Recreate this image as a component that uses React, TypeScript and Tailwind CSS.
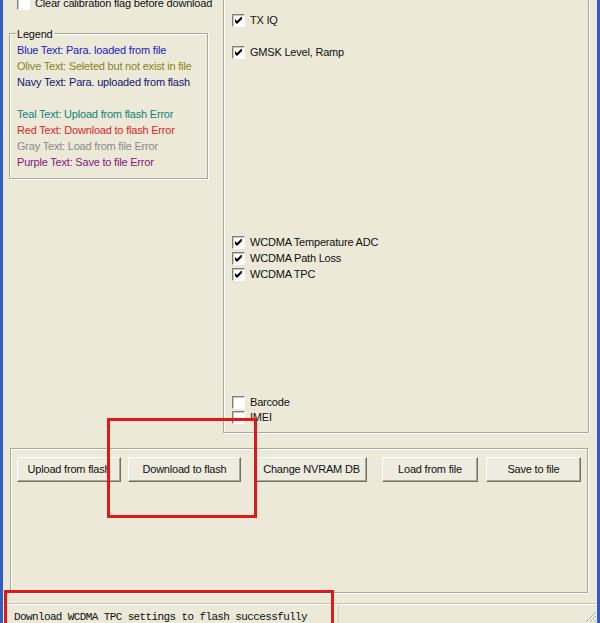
import React from 'react';

function CheckBox({ checked }: { checked?: boolean }) {
  return (
    <span className="flex w-[13px] h-[13px] shrink-0 items-center justify-center border border-t-[#808080] border-l-[#808080] border-r-white border-b-white bg-white shadow-[inset_1px_1px_0_#c9c6b8]">
      {checked && (
        <svg width="7" height="7" viewBox="0 0 7 7" className="block">
          <path d="M0 2 L2 4 L7 -1 L7 2 L2 7 L0 5 Z" fill="#000" />
        </svg>
      )}
    </span>
  );
}

function Row({ label, checked, h }: { label: string; checked?: boolean; h: string }) {
  return (
    <div className={`flex items-center gap-[5px] ${h}`}>
      <CheckBox checked={checked} />
      <span className="leading-[13px]">{label}</span>
    </div>
  );
}

function Btn({ label, w }: { label: string; w: string }) {
  return (
    <div className={`flex h-[25px] ${w} shrink-0 items-center justify-center border border-t-white border-l-white border-r-[#716f64] border-b-[#716f64] bg-[#eeebdf] shadow-[inset_-1px_-1px_0_#aca899]`}>
      {label}
    </div>
  );
}

const legend = [
  { text: 'Blue Text: Para. loaded from file', color: 'text-[#1c1cc4]' },
  { text: 'Olive Text: Seleted but not exist in file', color: 'text-[#86861c]' },
  { text: 'Navy Text: Para. uploaded from flash', color: 'text-[#141470]' },
  { text: '', color: '' },
  { text: 'Teal Text: Upload from flash Error', color: 'text-[#128478]' },
  { text: 'Red Text: Download to flash Error', color: 'text-[#e22626]' },
  { text: 'Gray Text: Load from file Error', color: 'text-[#8a8a8a]' },
  { text: 'Purple Text: Save to file Error', color: 'text-[#84167e]' },
];

export default function App() {
  return (
    <div className="relative flex w-[600px] h-[623px] overflow-hidden bg-[#ECE9D8] font-['Liberation_Sans',Arial,sans-serif] text-[11px] tracking-[-0.2px] text-[#111]">
      <div className="w-[3px] shrink-0 bg-[#2f5cc6]" />

      <div className="flex flex-1 flex-col">
        {/* upper area */}
        <div className="flex h-[434px]">
          <div className="flex w-[220px] shrink-0 flex-col">
            <div className="-mt-[3px] ml-[14px] flex h-[13px] items-center gap-[5px]">
              <CheckBox />
              <span className="leading-[13px]">Clear calibration flag before download</span>
            </div>

            <div className="relative ml-[6px] mt-[23px] h-[146px] w-[199px] border border-[#aca899] pl-[7px] pt-[8px] shadow-[inset_1px_1px_0_#fff,1px_1px_0_#fff]">
              <span className="absolute left-[6px] top-[-6px] bg-[#ECE9D8] px-[1px] leading-[13px]">Legend</span>
              {legend.map((l, i) => (
                <div key={i} className={`h-[16px] leading-[16px] ${l.color}`}>{l.text}</div>
              ))}
            </div>
          </div>

          <div className="h-[433px] w-[366px] shrink-0 border-x border-b border-[#aca899] pl-[8px] shadow-[inset_1px_0_0_#fff,1px_1px_0_#fff]">
            <div className="mt-[12px]">
              <Row label="TX IQ" checked h="h-[16px]" />
            </div>
            <div className="mt-[16px]">
              <Row label="GMSK Level, Ramp" checked h="h-[16px]" />
            </div>
            <div className="mt-[175px]">
              <Row label="WCDMA Temperature ADC" checked h="h-[15.5px]" />
              <Row label="WCDMA Path Loss" checked h="h-[15.5px]" />
              <Row label="WCDMA TPC" checked h="h-[16px]" />
            </div>
            <div className="mt-[112px]">
              <Row label="Barcode" h="h-[16px]" />
              <Row label="IMEI" h="h-[15px]" />
            </div>
          </div>
        </div>

        {/* button panel */}
        <div className="ml-[7px] mt-[14px] h-[145px] w-[578px] border border-[#aca899] pl-[6px] pt-[8px] shadow-[inset_1px_1px_0_#fff,1px_1px_0_#fff]">
          <div className="flex">
            <Btn label="Upload from flash" w="w-[104px]" />
            <div className="w-[7px]" />
            <Btn label="Download to flash" w="w-[113px]" />
            <div className="w-[15px]" />
            <Btn label="Change NVRAM DB" w="w-[111px]" />
            <div className="w-[15px]" />
            <Btn label="Load from file" w="w-[96px]" />
            <div className="w-[8px]" />
            <Btn label="Save to file" w="w-[95px]" />
          </div>
        </div>

        {/* status bar */}
        <div className="mt-[10px] flex h-[20px] border-t border-[#c7c4b6] shadow-[inset_0_1px_0_#fff]">
          <div className="w-[336px] border-r border-[#d6d3c6] pl-[11px] pt-[7px] font-['Liberation_Mono','Courier_New',monospace] text-[11px] leading-[13px] tracking-[-0.62px]">
            Download WCDMA TPC settings to flash successfully
          </div>
          <div className="flex-1" />
          <div className="flex items-end">
            <svg width="12" height="12" viewBox="0 0 12 12">
              <path d="M11 1 L1 11 M11 5 L5 11 M11 9 L9 11" stroke="#aca899" strokeWidth="1" />
              <path d="M11 2 L2 11 M11 6 L6 11 M11 10 L10 11" stroke="#fff" strokeWidth="1" />
            </svg>
          </div>
        </div>
      </div>

      <div className="w-[3px] shrink-0 bg-[#2f5cc6]" />

      {/* red annotation boxes */}
      <div className="absolute left-[107px] top-[418px] h-[100px] w-[150px] border-[3px] border-[#e01818]" />
      <div className="absolute left-[4px] top-[590px] h-[50px] w-[330px] border-[3px] border-[#e01818]" />
    </div>
  );
}
